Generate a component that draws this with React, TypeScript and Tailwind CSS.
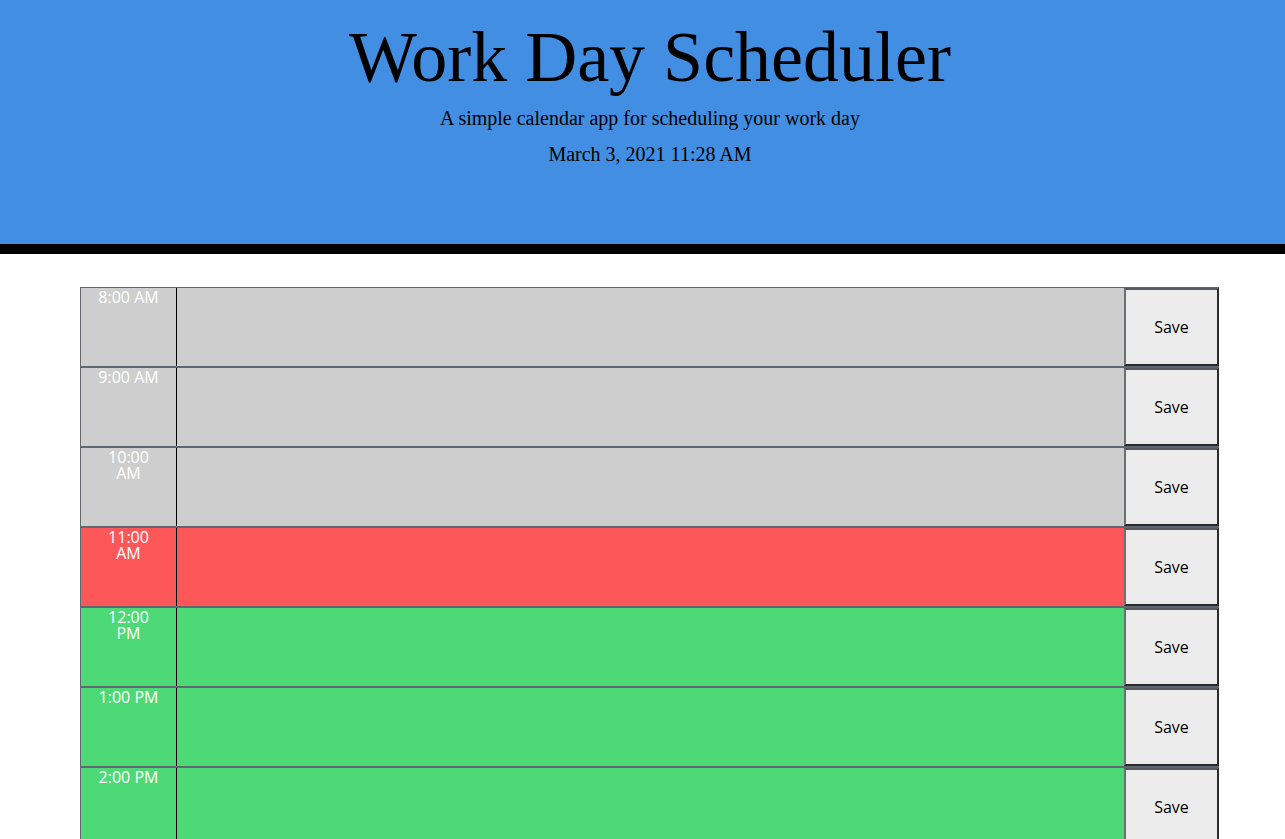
const HOURS = [
  { label: "8:00 AM", state: "past" },
  { label: "9:00 AM", state: "past" },
  { label: "10:00 AM", state: "past" },
  { label: "11:00 AM", state: "present" },
  { label: "12:00 PM", state: "future" },
  { label: "1:00 PM", state: "future" },
  { label: "2:00 PM", state: "future" },
  { label: "3:00 PM", state: "future" },
  { label: "4:00 PM", state: "future" },
  { label: "5:00 PM", state: "future" },
];

const STATE_BG: Record<string, string> = {
  past: "bg-[#cecece]",
  present: "bg-[#fe575a]",
  future: "bg-[#4cd976]",
};

function TimeBlock({ label, state }: { label: string; state: string }) {
  const bg = STATE_BG[state];
  return (
    <div className={`flex h-[80px] border-y border-l border-[#5f6770] ${bg}`}>
      {/* hour label */}
      <div className="w-[96px] shrink-0 border-r border-black px-[15px] pt-[1px] text-center text-[16px] leading-[16px] text-white font-['Open_Sans',sans-serif]">
        {label}
      </div>
      <textarea className={`flex-1 resize-none border-0 outline-none ${bg}`} />
      <button className="w-[95px] shrink-0 border-2 border-t-[#55595d] border-l-[#6b7075] border-b-[#2c2c2c] border-r-[#2c2c2c] bg-[#ececec] text-[16px] text-black font-['Open_Sans',sans-serif]">
        Save
      </button>
    </div>
  );
}

export default function App() {
  return (
    <div className="min-h-screen bg-white">
      {/* ── Header ── */}
      <header className="bg-[#418ee3] border-b-[10px] border-black pl-[15px] pt-[14px] pb-[72px] text-center text-black font-['Liberation_Serif',serif]">
        <h1 className="text-[72px] leading-[86px] font-normal">Work Day Scheduler</h1>
        <p className="text-[20px] leading-[36px]">A simple calendar app for scheduling your work day</p>
        <p className="text-[20px] leading-[36px]">March 3, 2021 11:28 AM</p>
      </header>

      {/* ── Time blocks ── */}
      <div className="ml-[80px] w-[1139px] pt-[33px] pb-10">
        {HOURS.map((h) => (
          <TimeBlock key={h.label} label={h.label} state={h.state} />
        ))}
      </div>
    </div>
  );
}
